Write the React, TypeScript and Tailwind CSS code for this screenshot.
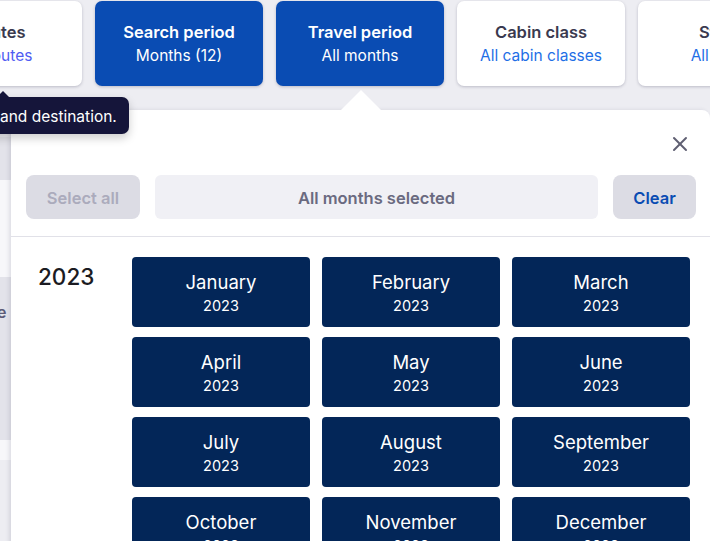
import { X } from "lucide-react";

const tabs = [
  { title: "Routes", value: "All routes", active: false },
  { title: "Search period", value: "Months (12)", active: true },
  { title: "Travel period", value: "All months", active: true },
  { title: "Cabin class", value: "All cabin classes", active: false },
  { title: "Stops", value: "All stops", active: false },
];

const months = [
  "January", "February", "March",
  "April", "May", "June",
  "July", "August", "September",
  "October", "November", "December",
];

export default function App() {
  return (
    <div
      className="relative h-[541px] w-[710px] overflow-hidden bg-[#ededf2]"
      style={{ fontFamily: "Inter, 'Noto Sans', sans-serif" }}
    >
      {/* underlying page strip on the left */}
      <div className="absolute left-0 top-[137px] flex w-[11px] flex-col">
        <div className="h-[43px] bg-[#e3e3ea]" />
        <div className="h-[97px] bg-[#f7f7fa]" />
        <div className="relative h-[163px] bg-[#e3e3ea]">
          <span className="absolute left-[-3px] top-[27px] text-[16px] font-semibold leading-none text-[#5c5c78]">
            e
          </span>
        </div>
        <div className="h-[20px] bg-[#f7f7fa]" />
      </div>

      {/* tabs */}
      <div className="ml-[-86px] flex gap-[13px] pt-px">
        {tabs.map((t) => (
          <div
            key={t.title}
            className={`flex h-[85px] w-[168px] shrink-0 flex-col items-center justify-center rounded-[7px] shadow-[0_1px_3px_rgba(40,40,70,0.25)] ${
              t.active ? "bg-[#0a4cb3] text-white" : "bg-white"
            }`}
          >
            <span
              className={`text-[16.5px] font-semibold leading-[22px] ${
                t.active ? "text-white" : "text-[#3a3a4f]"
              }`}
            >
              {t.title}
            </span>
            <span
              className={`pt-px text-[15.5px] leading-[23px] ${
                t.active ? "text-white" : t.title === "Routes" ? "text-[#4f5cf2]" : "text-[#1f6fe6]"
              }`}
            >
              {t.value}
            </span>
          </div>
        ))}
      </div>

      {/* panel */}
      <div className="relative ml-[11px] mt-[24px] h-[600px] rounded-tl-[6px] rounded-tr-[8px] bg-white shadow-[-2px_0_4px_rgba(40,40,70,0.12)]">
        <div className="absolute left-[330px] top-[-20px] h-0 w-0 border-x-[20px] border-b-[20px] border-x-transparent border-b-white" />

        <div className="flex justify-end pr-[18px] pt-[22px]">
          <X className="h-[24px] w-[24px] text-[#5f5f72]" strokeWidth={2} />
        </div>

        <div className="mt-[19px] flex gap-[15px] pl-[15px] pr-[14px]">
          <button className="h-[44px] w-[114px] rounded-[8px] bg-[#dcdce4] pt-[2px] text-[16.5px] font-semibold text-[#ababbc]">
            Select all
          </button>
          <div className="flex h-[44px] flex-1 items-center justify-center rounded-[6px] bg-[#f0f0f5] pt-[2px] text-[16.5px] font-semibold text-[#6a6a80]">
            All months selected
          </div>
          <button className="h-[44px] w-[83px] rounded-[8px] bg-[#dcdce4] pt-[2px] text-[16.5px] font-semibold text-[#0a4cb3]">
            Clear
          </button>
        </div>

        <div className="mt-[17px] border-t border-[#e1e1e8]" />

        <div className="flex pt-[20px]">
          <div className="w-[121px] pl-[27px] pt-[7px] text-[22.5px] font-medium leading-[26px] text-[#1b1b22]">
            2023
          </div>
          <div className="grid grid-cols-[178px_178px_178px] gap-x-[12px] gap-y-[10px]">
            {months.map((m) => (
              <div
                key={m}
                className="flex h-[70px] flex-col items-center justify-center rounded-[4px] bg-[#032658] pt-[3px] text-white"
              >
                <span className="text-[18.5px] leading-[24px]">{m}</span>
                <span className="pt-px text-[14.5px] leading-[22px]">2023</span>
              </div>
            ))}
          </div>
        </div>
      </div>

      {/* tooltip */}
      <div className="absolute left-[-106px] top-[97px] flex h-[37px] items-center rounded-[7px] bg-[#15153a] pl-[10px] pr-[12px] pt-[2px] text-[15.5px] text-white shadow-[0_4px_10px_rgba(0,0,0,0.2)]">
        Select origin and destination.
        <div className="absolute left-[103px] top-[-6px] h-0 w-0 border-x-[6px] border-b-[6px] border-x-transparent border-b-[#15153a]" />
      </div>
    </div>
  );
}
